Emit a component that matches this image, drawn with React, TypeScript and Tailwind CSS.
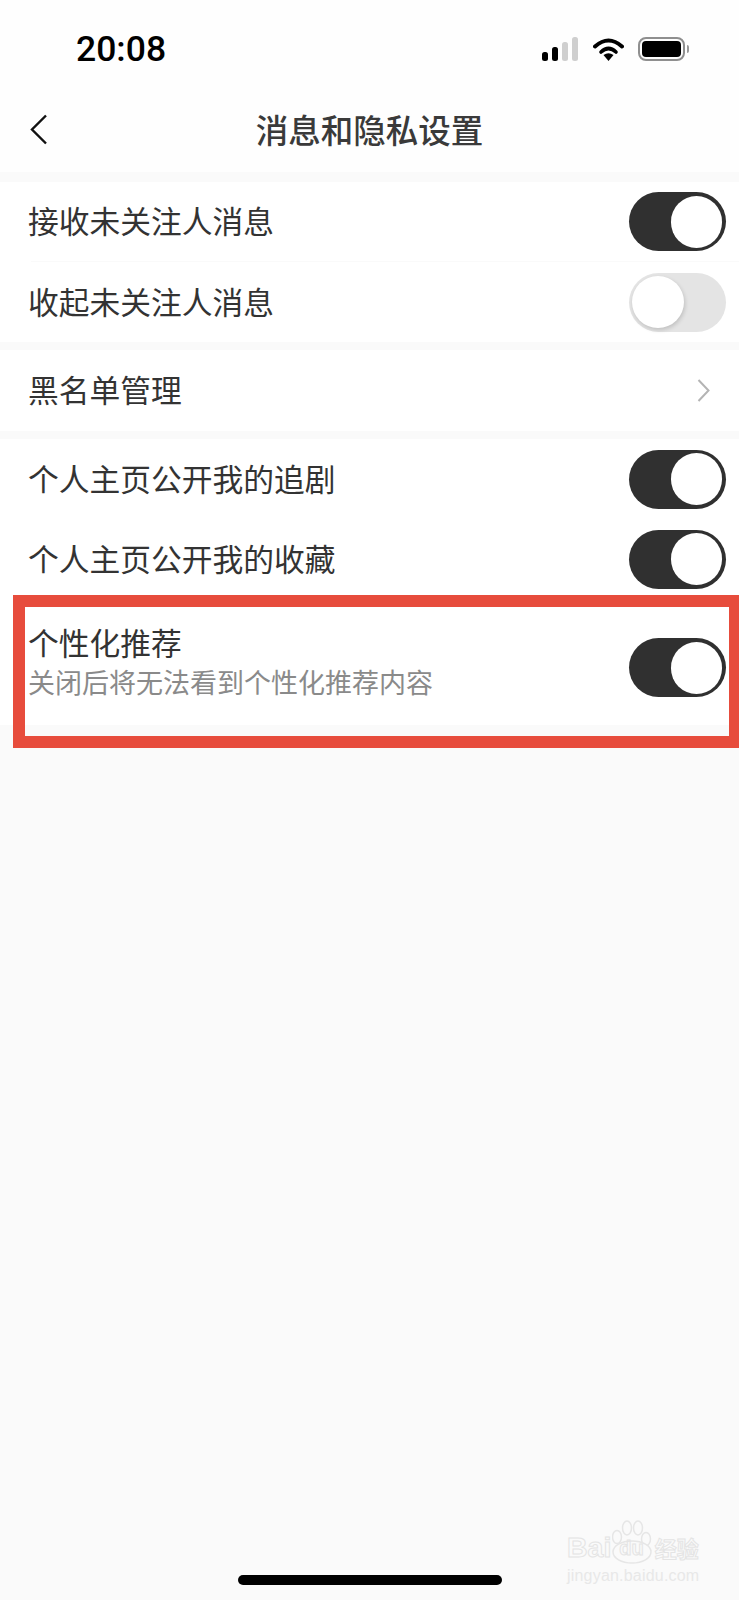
function Toggle({ on = true }: { on?: boolean }) {
  if (!on) {
    return (
      <div className="flex h-[59px] w-[97px] items-center rounded-full bg-[#e4e4e4] pl-[3px]">
        <div className="h-[52px] w-[52px] rounded-full bg-white shadow-[1px_2px_4px_rgba(0,0,0,0.16)]" />
      </div>
    );
  }
  return (
    <div className="flex h-[59px] w-[97px] items-center justify-end rounded-full bg-[#303030] pr-[4px]">
      <div className="h-[52px] w-[51px] rounded-full bg-white" />
    </div>
  );
}

function Row({ label, on = true, className = '' }: { label: string; on?: boolean; className?: string }) {
  return (
    <div className={`flex items-center justify-between bg-white pl-[28px] pr-[13px] ${className}`}>
      <span className="mb-[2px] text-[30.75px] leading-none text-[#333333]">{label}</span>
      <Toggle on={on} />
    </div>
  );
}

function StatusIcons() {
  return (
    <div className="flex items-center">
      <svg width="37" height="24" viewBox="0 0 37 24" className="mr-[15px]">
        <rect x="1" y="15" width="6" height="9" rx="2.5" fill="#000" />
        <rect x="11" y="10" width="6" height="14" rx="2.5" fill="#000" />
        <rect x="21" y="5" width="6" height="19" rx="2.5" fill="#cfcfcf" />
        <rect x="31" y="0" width="6" height="24" rx="2.5" fill="#cfcfcf" />
      </svg>
      <svg width="31" height="24" viewBox="0 0 31 24" className="mr-[14px]">
        <path d="M2 9.5 Q15.5 -2.5 29 9.5" fill="none" stroke="#000" strokeWidth="4" strokeLinecap="round" />
        <path d="M8 15 Q15.5 8 23 15" fill="none" stroke="#000" strokeWidth="3.6" strokeLinecap="round" />
        <path d="M10.5 18 Q15.5 14.5 20.5 18 L15.5 24 Z" fill="#000" />
      </svg>
      <div className="flex items-center">
        <div className="flex h-[24px] w-[47px] items-center justify-center rounded-[8px] border-2 border-[#8f8f8f]">
          <div className="h-[16px] w-[39px] rounded-[4px] bg-black" />
        </div>
        <div className="ml-[2px] h-[8px] w-[2px] rounded-r bg-[#9a9a9a]" />
      </div>
    </div>
  );
}

function Watermark() {
  return (
    <div className="absolute left-[567px] top-[1520px] w-[132px]">
      <svg width="42" height="44" viewBox="0 0 42 44" className="absolute left-[45px] top-0">
        <g fill="#fafafa" stroke="#e6e6e6" strokeWidth="1.5">
          <ellipse cx="5" cy="17" rx="4.5" ry="6.5" />
          <ellipse cx="15" cy="8" rx="4.5" ry="7" />
          <ellipse cx="26" cy="8" rx="4.5" ry="7" />
          <ellipse cx="34" cy="19" rx="4.5" ry="6.5" />
          <ellipse cx="20" cy="32" rx="19" ry="11" />
        </g>
      </svg>
      <div className="relative flex h-[44px] items-end whitespace-nowrap font-['Liberation_Sans',sans-serif] text-[28.5px] font-bold leading-[33px] text-transparent [-webkit-text-stroke:1px_#e4e4e4]">
        <span>Bai</span>
        <span className="ml-[8px] text-[20px] leading-[31px]">du</span>
        <span className="ml-[11px] font-['Noto_Sans_CJK_SC',sans-serif] text-[22px] leading-[33px]">经验</span>
      </div>
      <div className="relative mt-[4px] whitespace-nowrap font-['Liberation_Sans',sans-serif] text-[16px] leading-[16px] tracking-[0.2px] text-[#e8e8e8]">
        jingyan.baidu.com
      </div>
    </div>
  );
}

export default function App() {
  return (
    <div className="relative h-[1600px] w-[739px] overflow-hidden bg-[#fafafa] font-['Noto_Sans_CJK_SC','Noto_Sans',sans-serif]">
      <div className="h-[172px] bg-[#fefefe]">
        <div className="flex h-[98px] items-center justify-between pl-[76px] pr-[50px]">
          <span className="mt-[1px] font-['Roboto',sans-serif] text-[35.5px] font-medium leading-none text-black">20:08</span>
          <StatusIcons />
        </div>
        <div className="grid h-[64px] grid-cols-[1fr_auto_1fr] items-center pb-[2px]">
          <svg width="18" height="31" viewBox="0 0 18 31" className="ml-[30px]">
            <path d="M16 1.5 L2 15.5 L16 29.5" fill="none" stroke="#111" strokeWidth="2.4" />
          </svg>
          <h1 className="text-[32.5px] font-medium leading-none text-[#3a3a3a]">消息和隐私设置</h1>
        </div>
      </div>

      <div className="mt-[10px]">
        <Row label="接收未关注人消息" className="h-[79px]" />
        <div className="bg-white pl-[31px]">
          <div className="h-px bg-[#fafafa]" />
        </div>
        <Row label="收起未关注人消息" on={false} className="h-[80px]" />
      </div>

      <div className="mt-[8px] flex h-[81px] items-center justify-between bg-white pl-[28px] pr-[29px]">
        <span className="mb-[2px] text-[30.75px] leading-none text-[#333333]">黑名单管理</span>
        <svg width="13" height="23" viewBox="0 0 13 23">
          <path d="M1.5 1 L11.5 11.5 L1.5 22" fill="none" stroke="#b4b4b4" strokeWidth="2" />
        </svg>
      </div>

      <div className="mt-[8px]">
        <Row label="个人主页公开我的追剧" className="h-[80px]" />
        <Row label="个人主页公开我的收藏" className="h-[80px]" />
        <div className="flex h-[126px] items-start justify-between bg-white pl-[28px] pr-[13px]">
          <div className="pt-[27px]">
            <div className="text-[30.75px] leading-[32px] text-[#333333]">个性化推荐</div>
            <div className="mt-[9px] text-[27px] leading-[30px] text-[#8a8a8a]">关闭后将无法看到个性化推荐内容</div>
          </div>
          <div className="pt-[39px]">
            <Toggle />
          </div>
        </div>
      </div>

      <div className="absolute left-[13px] top-[595px] h-[153px] w-[726px] border-y-[12px] border-l-[12px] border-r-[10px] border-[#e74c3c]" />

      <Watermark />
      <div className="absolute left-[238px] top-[1575px] h-[10px] w-[264px] rounded-full bg-black" />
    </div>
  );
}
